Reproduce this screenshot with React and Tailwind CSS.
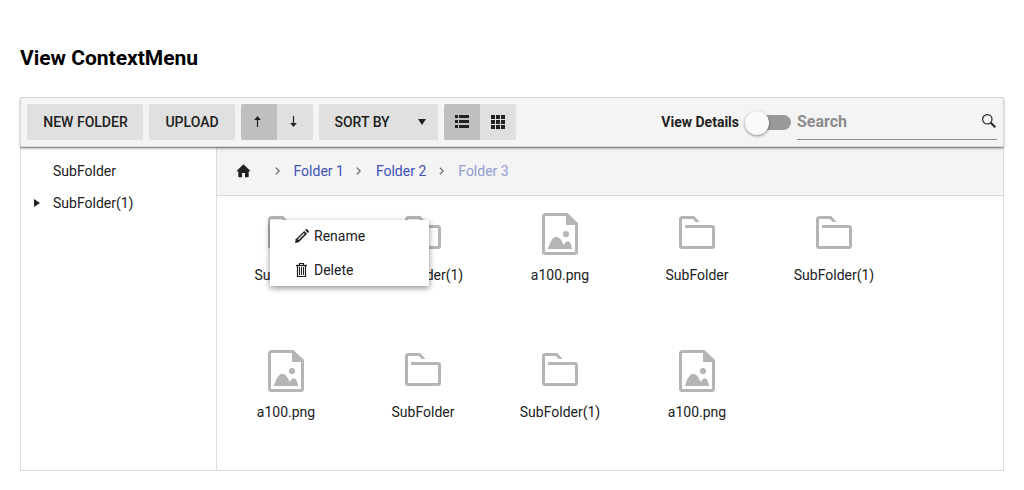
const FILES = [
  ["folder", "SubFolder"],
  ["folder", "SubFolder(1)"],
  ["image", "a100.png"],
  ["folder", "SubFolder"],
  ["folder", "SubFolder(1)"],
  ["image", "a100.png"],
  ["folder", "SubFolder"],
  ["folder", "SubFolder(1)"],
  ["image", "a100.png"],
];

function FolderIcon() {
  return (
    <svg width="36" height="42" viewBox="0 0 36 42" fill="none">
      <path d="M6 13.500H33a1.500 1.500 0 0 1 1.500 1.500V33a1.500 1.500 0 0 1-1.500 1.500H3a1.500 1.500 0 0 1-1.500-1.500V6a1.500 1.500 0 0 1 1.500-1.500H14.500" stroke="#b5b5b5" strokeWidth="3" />
      <path d="M14 3h1.200L20.600 9h-4L14 6z" fill="#b5b5b5" />
    </svg>
  );
}

function ImageIcon() {
  return (
    <svg width="36" height="42" viewBox="0 0 36 42" fill="none">
      <path d="M25 1.500H3a1.500 1.500 0 0 0-1.500 1.500v36a1.500 1.500 0 0 0 1.500 1.500h30a1.500 1.500 0 0 0 1.500-1.500V11" stroke="#b5b5b5" strokeWidth="3" />
      <path d="M24 0h1.500L36 10V12H24z" fill="#b5b5b5" />
      <circle cx="24" cy="21" r="3.100" fill="#b5b5b5" />
      <path d="M6 36C8 29 11 23.800 14 23.800C17.500 23.800 20 28 21.800 32C23 29.500 24.600 28.300 26 28.300C28 28.300 29.500 32 30 36z" fill="#b5b5b5" />
    </svg>
  );
}

function Chevron() {
  return (
    <svg width="6" height="8" viewBox="0 0 6 8" fill="none">
      <path d="M0.800 0.600L4.200 4L0.800 7.400" stroke="#6b6b6b" strokeWidth="1.200" />
    </svg>
  );
}

function Toolbar() {
  return (
    <div className="relative z-10 -mx-px -mt-px flex h-[50px] shrink-0 items-center border border-[#d6d6d6] bg-[#f4f4f4] pl-[6px] pr-[6px] font-medium shadow-[0_2px_3px_-1px_rgba(0,0,0,0.45),0_1px_1px_rgba(0,0,0,0.2)]">
      <button className="mr-[6px] h-9 w-[116px] rounded-[2px] bg-[#e0e0e0] pl-px">NEW FOLDER</button>
      <button className="mr-[6px] h-9 w-[86px] rounded-[2px] bg-[#e0e0e0]">UPLOAD</button>
      <div className="mr-[6px] flex h-9 w-[72px] overflow-hidden rounded-[2px] bg-[#e0e0e0]">
        <button className="flex w-9 items-center justify-center bg-[#bfbfbf] pr-[3px]">
          <svg width="7" height="12" viewBox="0 0 7 12" fill="#212121"><path d="M3.500 0L6.800 4H0.200z" /><path d="M2.900 3h1.200v8H2.900z" /></svg>
        </button>
        <button className="flex w-9 items-center justify-center pr-[3px]">
          <svg width="7" height="12" viewBox="0 0 7 12" fill="#212121"><path d="M3.500 11L6.800 7H0.200z" /><path d="M2.900 0h1.200v8H2.900z" /></svg>
        </button>
      </div>
      <button className="mr-[6px] flex h-9 w-[119px] items-center justify-between bg-[#e0e0e0] pl-[15.5px] pr-3">
        SORT BY
        <svg width="8" height="6" viewBox="0 0 8 6" fill="#212121"><path d="M0 0h8L4 6z" /></svg>
      </button>
      <div className="flex h-9 w-[72px] overflow-hidden rounded-[2px] bg-[#e0e0e0]">
        <button className="flex w-9 items-center justify-center bg-[#bfbfbf]">
          <svg width="14" height="14" viewBox="0 0 14 14" fill="#212121"><path d="M0 0h3v3H0zM4 0h10v3H4zM0 5h3v3H0zM4 5h10v3H4zM0 10h3v3H0zM4 10h10v3H4z" /></svg>
        </button>
        <button className="flex w-9 items-center justify-center">
          <svg width="14" height="14" viewBox="0 0 14 14" fill="#212121"><path d="M0 0h4v4H0zM5 0h4v4H5zM10 0h4v4h-4zM0 5h4v4H0zM5 5h4v4H5zM10 5h4v4h-4zM0 10h4v4H0zM5 10h4v4H5zM10 10h4v4h-4z" /></svg>
        </button>
      </div>
      <span className="ml-auto mr-[18px] font-bold">View Details</span>
      <div className="relative mr-[6px] h-[15px] w-[34px] rounded-full bg-[#999]">
        <div className="absolute -left-3 -top-1 size-6 rounded-full bg-[#fafafa] shadow-[0_1px_3px_rgba(0,0,0,0.45)]" />
      </div>
      <div className="flex h-9 w-[200px] items-center justify-between border-b border-[#8c8c8c] pr-px">
        <span className="text-base font-bold text-[#8c8c8c]">Search</span>
        <svg className="mb-[2px]" width="14" height="14" viewBox="0 0 14 14" fill="none" stroke="#212121"><circle cx="5.300" cy="5.300" r="4.700" strokeWidth="1.200" /><path d="M8.800 8.800L13.300 13.300" strokeWidth="2" /></svg>
      </div>
    </div>
  );
}

function ContextMenu() {
  return (
    <div className="absolute left-[53px] top-6 h-[66px] w-[159px] bg-white shadow-[0_2px_6px_rgba(0,0,0,0.45)]">
      <div className="flex h-8 items-center gap-[5px] pl-[25px]">
        <svg width="14" height="14" viewBox="0 0 14 14" fill="none"><path d="M0 14L0.800 10.300L9.200 1.900L12.100 4.800L3.700 13.200z" fill="#212121" /><path d="M3.200 10.600L9.300 4.500" stroke="#fff" strokeWidth="1.100" /><path d="M10 1.100L10.700 0.400a1.200 1.200 0 0 1 1.600 0L13.600 1.700a1.200 1.200 0 0 1 0 1.600L12.900 4z" fill="#212121" /></svg>
        Rename
      </div>
      <div className="flex h-9 items-center gap-[6px] pl-6">
        <svg width="14" height="14" viewBox="0 0 14 14" fill="none" stroke="#212121"><path d="M2 2.500H13" strokeWidth="1.300" /><path d="M5.500 2V0.500H9.500V2M3.500 3V13.500H11.500V3" strokeWidth="1.200" /><path d="M5.500 4V12M7.500 4V12M9.500 4V12" /></svg>
        Delete
      </div>
    </div>
  );
}

export default function App() {
  return (
    <div className="h-[490px] overflow-hidden bg-white px-5 font-[Roboto,sans-serif] text-sm text-[#212121]">
      <h1 className="h-[97px] pt-[43px] text-[21px] font-bold leading-[30px] text-black">View ContextMenu</h1>
      <div className="flex h-[374px] flex-col border border-[#dcdcdc]">
        <Toolbar />
        <div className="flex min-h-0 flex-1">
          <nav className="w-[196px] border-r border-[#dcdcdc] pt-2">
            <div className="flex h-8 items-center pl-8">SubFolder</div>
            <div className="flex h-8 items-center pl-[13px]">
              <svg className="mr-[13px]" width="6" height="8" viewBox="0 0 6 8" fill="#212121"><path d="M0 0L6 4L0 8z" /></svg>
              SubFolder(1)
            </div>
          </nav>
          <main className="relative flex-1">
            <div className="flex h-[49px] items-center border-b border-[#d6d6d6] bg-[#f4f4f4] pl-[19px] text-[#3f51b5]">
              <svg className="mr-[24px]" width="15" height="14" viewBox="0 0 15 14" fill="#212121"><path d="M7.500 0.300L14.700 7.300H12.700V12.500a.7.7 0 0 1-.7.7H9V9H6V13.200H3a.7.7 0 0 1-.7-.7V7.300H0.300z" /></svg>
              <Chevron />
              <span className="ml-[12.5px] mr-[12.5px]">Folder 1</span>
              <Chevron />
              <span className="ml-[13.5px] mr-[12.5px]">Folder 2</span>
              <Chevron />
              <span className="ml-[13.5px] text-[#929bd2]">Folder 3</span>
            </div>
            <div className="relative">
              <div className="grid auto-rows-[137px] grid-cols-[repeat(5,137px)] pl-[0.5px]">
                {FILES.map(([kind, name], i) => (
                  <div key={i} className="flex flex-col items-center pt-[17px]">
                    {kind === "folder" ? <FolderIcon /> : <ImageIcon />}
                    <span className="mt-[10px] leading-5">{name}</span>
                  </div>
                ))}
              </div>
              <ContextMenu />
            </div>
          </main>
        </div>
      </div>
    </div>
  );
}
